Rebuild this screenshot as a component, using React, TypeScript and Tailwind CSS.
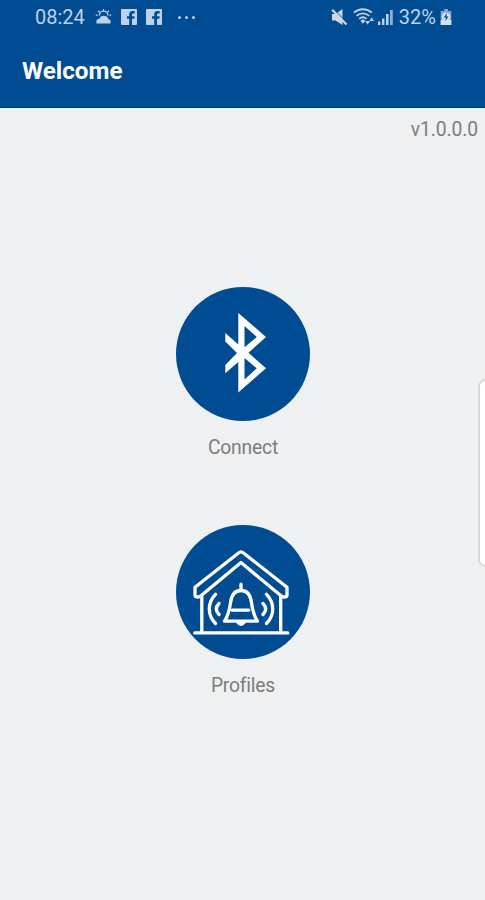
import type { ReactNode } from "react";

function WeatherIcon() {
  return (
    <svg width="17" height="16" viewBox="0 0 17 16" fill="none" stroke="#bdd2ea" strokeWidth="1.3">
      <path d="M4.3 6.5a4.3 4.3 0 0 1 8.6 0M8.5 0v1.7M3.2 1.8l1.3 1.4M13.8 1.8l-1.3 1.4M.8 5.8l1.7.6M16.2 5.8l-1.7.6" />
      <path
        d="M1.5 14.5V11l3-1.5a4.2 4.2 0 0 1 4.8-2.5 3.8 3.8 0 0 1 4 3l2.2 1.3v3.2Z"
        fill="#bdd2ea"
        stroke="none"
      />
    </svg>
  );
}

function FacebookIcon() {
  return (
    <svg width="16" height="16" viewBox="0 0 16 16">
      <path
        d="M1 0h14a1 1 0 0 1 1 1v14a1 1 0 0 1-1 1h-4V9.8h2.3l.4-2.6H11V5.7c0-.8.4-1.2 1.2-1.2h1.5V2h-2.2c-2.2 0-3.3 1.2-3.3 3.3v1.9H6v2.6h2.2V16H1a1 1 0 0 1-1-1V1a1 1 0 0 1 1-1Z"
        fill="#bdd2ea"
      />
    </svg>
  );
}

function MuteIcon() {
  return (
    <svg width="17" height="17" viewBox="0 0 17 17">
      <path d="M1 5h3.5l7-5v16l-7-4.5H1Z" fill="#c8d8ea" />
      <path d="M2.4 0 17 14.6" stroke="#004c93" strokeWidth="1" />
      <path d="M1.2.8 15.5 15.4" stroke="#c8d8ea" strokeWidth="2.2" />
    </svg>
  );
}

function WifiIcon() {
  return (
    <svg width="22" height="18" viewBox="0 0 22 18" fill="none" stroke="#bdd2ea" strokeWidth="1.8">
      <path d="M1 4.7c5.2-4.6 12.6-4.6 17.8 0M3.6 7.9c3.7-3.3 8.9-3.3 12.6 0M6.2 10.9c2.2-1.9 5.2-1.9 7.4 0" />
      <path d="m7.4 12.8 2.5-1.6 2.5 1.6-2.5 3Z" fill="#bdd2ea" stroke="none" />
      <path d="M12.3 13h4.6l-2.3 3.8ZM16.4 13H21l-2.3-3.8Z" fill="#bdd2ea" stroke="none" />
    </svg>
  );
}

function SignalIcon() {
  return (
    <svg width="15" height="16" viewBox="0 0 15 16" fill="#bdd2ea">
      <path d="M0 12.5h2.4V16H0ZM4 9.5h2.4V16H4ZM8 5h2.6v11H8Z" />
      <path d="M12 1h2.8v15H12Z" opacity=".75" />
    </svg>
  );
}

function BatteryIcon() {
  return (
    <svg width="12" height="16" viewBox="0 0 12 16">
      <path d="M4 0h4v2h3.3v14H.7V2H4Z" fill="#7fa5cb" />
      <path d="M.7 11h10.6v5H.7Z" fill="#d3e2f0" />
      <circle cx="6" cy="7.8" r="4.4" fill="#d3e2f0" />
      <path d="M7 3.8 3.6 8.5h2.3l-.6 3.4 3.3-4.5H6.3Z" fill="#004c93" />
    </svg>
  );
}

function BluetoothIcon() {
  return (
    <svg className="size-full" viewBox="0 0 134 134">
      <path
        fill="#fff"
        fillRule="evenodd"
        d="M62.3 26 90 50 72.5 65.8 90 81.2 62.3 105.6V75L49.3 86.3V78L61 66 49.3 54.5V46L62.3 57.5ZM68.5 39V60.3L80.8 50ZM68.5 71V92.4L80.8 81.3Z"
      />
    </svg>
  );
}

function HouseBellIcon() {
  return (
    <svg
      className="size-full"
      viewBox="0 0 134 134"
      fill="none"
      stroke="#fff"
      strokeWidth="3.3"
      strokeLinecap="round"
      strokeLinejoin="round"
    >
      <path d="M62.5 28q2.5-2.2 5 0L111 62.2v8q0 1.8-3 1.8-1.5 0-3-1.2L65 37.5 25 70.8q-1.5 1.2-3 1.2-3 0-3-1.8v-8Z" />
      <path d="M25.8 70.5v37M104.7 70.5v37M18.8 107.9h93" />
      <path d="M65 59.2v5.5M48.5 96.2c4-6 5.2-12.5 6.1-19C55.6 69.7 59.5 65.5 65 65.5s9.4 4.2 10.4 11.7c.9 6.5 2.1 13 6.1 19Z" />
      <path d="M56.2 85.2h16.5" />
      <path d="M62 97.5q3 3.5 6 0Z" />
      <path d="M39.5 69.3c-8.3 8.7-8.3 20.5 0 29.2M43 78.5c-3.5 3.6-3.5 7.4 0 11M90.5 69.3c8.3 8.7 8.3 20.5 0 29.2M87 78.5c3.5 3.6 3.5 7.4 0 11" />
    </svg>
  );
}

function MenuItem({ label, children }: { label: string; children: ReactNode }) {
  return (
    <button className="flex flex-col items-center">
      <span className="block size-[134px] rounded-full bg-[#004c93]">{children}</span>
      <span className="mt-[15px] text-[19.3px] leading-6 tracking-[-0.2px] text-[#7b7d80]">{label}</span>
    </button>
  );
}

export default function App() {
  return (
    <div className="relative flex h-[900px] w-[485px] flex-col overflow-hidden bg-[#eef0f2] font-[Roboto,sans-serif]">
      <header className="h-[108px] border-b border-[#003f86] bg-[#004c93]">
        <div className="flex h-[34px] items-center pr-[33px] pl-[35px] text-[20px] text-[#bdd2ea]">
          <span className="w-[60px]">08:24</span>
          <WeatherIcon />
          <div className="ml-[9px] flex gap-[9px]">
            <FacebookIcon />
            <FacebookIcon />
          </div>
          <div className="ml-[16px] flex gap-[4px]">
            <i className="size-[3px] rounded-full bg-[#bdd2ea]" />
            <i className="size-[3px] rounded-full bg-[#bdd2ea]" />
            <i className="size-[3px] rounded-full bg-[#bdd2ea]" />
          </div>
          <div className="ml-auto flex items-center">
            <MuteIcon />
            <div className="ml-[5px] flex items-center gap-[3px]">
              <WifiIcon />
              <SignalIcon />
            </div>
            <span className="mr-[4px] ml-[6px]">32%</span>
            <BatteryIcon />
          </div>
        </div>
        <h1 className="mt-[21px] pl-[22px] text-[24.2px] leading-8 font-bold text-white">Welcome</h1>
      </header>
      <p className="pt-[10px] pr-[7px] text-right text-[19.3px] leading-6 tracking-[-0.1px] text-[#7b7d80]">v1.0.0.0</p>
      <main className="mt-[145px] flex flex-col items-center gap-[64.5px] pl-px">
        <MenuItem label="Connect">
          <BluetoothIcon />
        </MenuItem>
        <MenuItem label="Profiles">
          <HouseBellIcon />
        </MenuItem>
      </main>
      {/* edge panel handle */}
      <div className="absolute top-[379px] -right-2 h-[188px] w-[15px] rounded-lg border-2 border-[#d6d8da] bg-white" />
    </div>
  );
}
